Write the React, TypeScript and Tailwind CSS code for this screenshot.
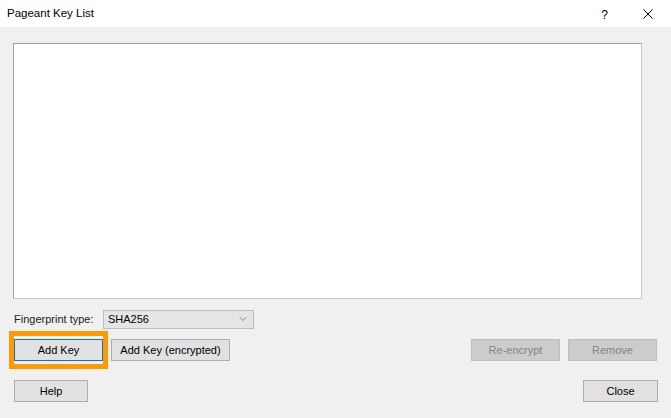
import { ChevronDown } from 'lucide-react';

/* ── Win32-style button ─────────────────────────────────────────────────── */

type BtnProps = {
  label: string;
  width: string;
  disabled?: boolean;
  isDefault?: boolean;
};

const Btn = ({ label, width, disabled, isDefault }: BtnProps) => {
  const cls = [
    'h-[22px] flex items-center justify-center text-[11px] leading-none border',
    width,
    disabled
      ? 'bg-[#cccccc] border-[#bfbfbf] text-[#838383]'
      : isDefault
        ? 'bg-[#e1e1e1] border-[#0078d7] text-black'
        : 'bg-[#e1e1e1] border-[#adadad] text-black',
  ].join(' ');
  return <div className={cls}>{label}</div>;
};

/* ── Dialog ─────────────────────────────────────────────────────────────── */

export default function App() {
  return (
    <div
      className="w-[671px] h-[418px] bg-[#f0f0f0] flex flex-col overflow-hidden"
      style={{ fontFamily: '"Liberation Sans", Arial, sans-serif' }}
    >
      {/* Title bar */}
      <div className="h-[27px] bg-white flex items-center pl-[7px] shrink-0">
        <span className="text-[11.5px] text-black flex-1">Pageant Key List</span>
        <span className="text-[12px] text-black mr-[35px] mt-[3px]">?</span>
        <svg width="10" height="10" viewBox="0 0 10 10" className="mr-[18px]">
          <path d="M0.5 0.5 L9.5 9.5 M9.5 0.5 L0.5 9.5" stroke="#000" strokeWidth="1" />
        </svg>
      </div>

      {/* Body */}
      <div className="flex flex-col pl-[13px] pr-[13px] pt-[16px]">
        {/* Key list */}
        <div className="w-[629px] h-[256px] bg-white border border-[#a0a0a0] border-r-[#c8c8c8] border-b-[#c8c8c8]" />

        {/* Fingerprint type */}
        <div className="flex items-center mt-[11px] pl-[1px] h-[18px]">
          <span className="text-[11px] text-[#222] w-[89px]">Fingerprint type:</span>
          <div className="w-[151px] h-[19px] bg-[#e5e5e5] border border-[#bcbcbc] flex items-center pl-[4px] pr-[4px]">
            <span className="text-[11px] text-black flex-1">SHA256</span>
            <ChevronDown size={12} strokeWidth={1.5} className="text-[#606060]" />
          </div>
        </div>

        {/* Key buttons */}
        <div className="flex items-center mt-[11px] pl-[1px]">
          <div className="relative">
            <Btn label="Add Key" width="w-[89px]" isDefault />
            <div className="absolute -left-[5px] -top-[8px] w-[99px] h-[38px] border-[5px] border-[#ff9a00] pointer-events-none" />
          </div>
          <div className="ml-[8px]">
            <Btn label="Add Key (encrypted)" width="w-[119px]" />
          </div>
          <div className="flex-1" />
          <Btn label="Re-encrypt" width="w-[89px]" disabled />
          <div className="ml-[8px] mr-[1px]">
            <Btn label="Remove" width="w-[89px]" disabled />
          </div>
        </div>

        {/* Bottom buttons */}
        <div className="flex items-center justify-between mt-[19px] pl-[1px]">
          <Btn label="Help" width="w-[74px]" />
          <Btn label="Close" width="w-[75px]" />
        </div>
      </div>
    </div>
  );
}
